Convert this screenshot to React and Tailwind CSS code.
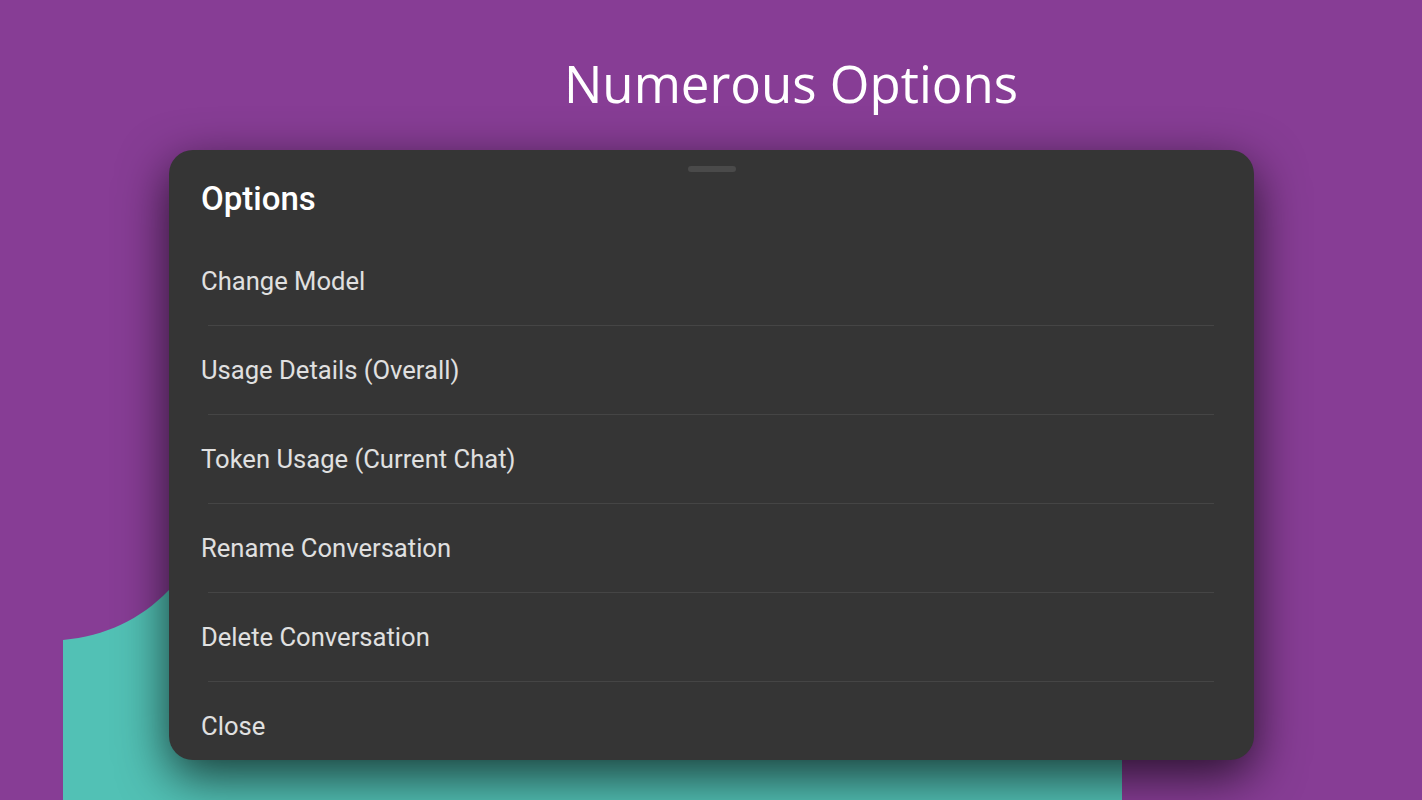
export default function App() {
  const items = [
    "Change Model",
    "Usage Details (Overall)",
    "Token Usage (Current Chat)",
    "Rename Conversation",
    "Delete Conversation",
    "Close",
  ];
  return (
    <div className="relative w-[1422px] h-[800px] overflow-hidden bg-[#873d95]">
      <svg className="absolute left-0 top-0" width="1422" height="800" viewBox="0 0 1422 800">
        <path d="M63 800 L63 640 C105 636 140 620 169 590 L260 500 L1122 500 L1122 800 Z" fill="#52c1b5" />
      </svg>
      <div className="relative flex flex-col">
        <div className="flex justify-center pl-[160px] pt-[50px] h-[150px]">
          <h1 className="text-white text-[51px] leading-[66px] font-['Open_Sans',sans-serif] font-normal">
            Numerous Options
          </h1>
        </div>
        <div className="ml-[169px] w-[1085px] h-[610px] rounded-[24px] bg-[#353535] shadow-[0_16px_50px_rgba(0,0,0,0.7)] flex flex-col font-['Roboto',sans-serif] overflow-hidden">
          <div className="shrink-0 flex justify-center pt-[16px]">
            <div className="w-[48px] h-[6px] rounded-full bg-[#4a4a4a]" />
          </div>
          <div className="shrink-0 pl-[32px] pt-[7px] h-[65px] text-white text-[33px] font-medium leading-[40px]">Options</div>
          <div className="shrink-0 flex flex-col">
            {items.map((t, i) => (
              <div key={t} className="flex flex-col">
                <div className="h-[88px] flex items-center pl-[32px] text-[25.6px] text-[#e0e0e0]">{t}</div>
                {i < items.length - 1 && <div className="ml-[39px] mr-[40px] h-px bg-[#454545]" />}
              </div>
            ))}
          </div>
        </div>
      </div>
    </div>
  );
}
